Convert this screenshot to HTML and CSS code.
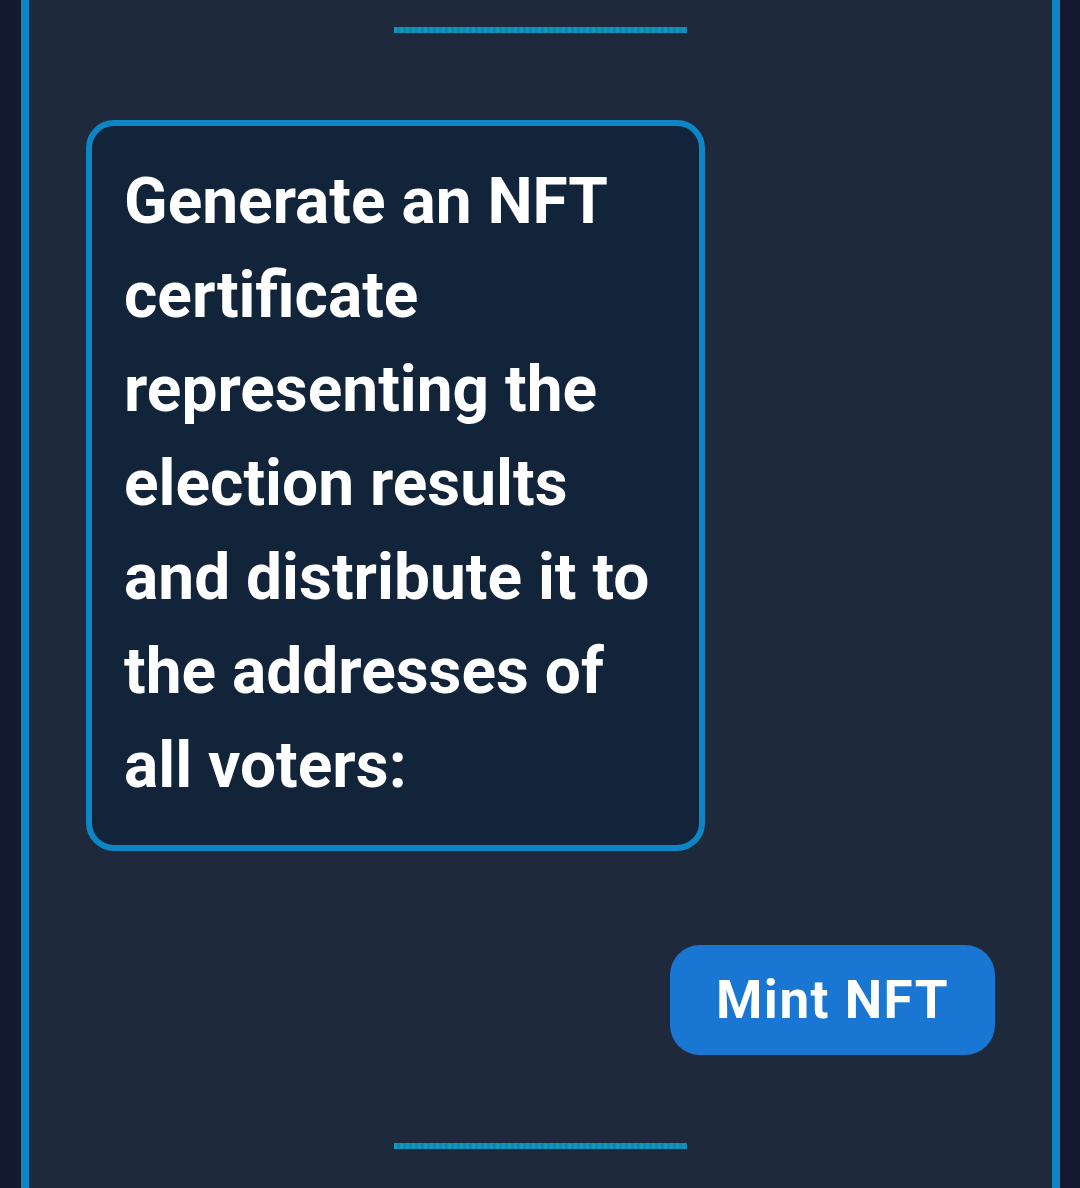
FILE: index.html
```html
<!DOCTYPE html>
<html lang="en">
<head>
<meta charset="utf-8">
<title>Mint NFT</title>
<link rel="stylesheet" href="styles.css">
</head>
<body>
<div class="frame">
  <div class="divider divider-top"></div>
  <div class="card">
    <p class="card-text">Generate an NFT certificate representing the election results and distribute it to the addresses of all voters:</p>
  </div>
  <div class="actions">
    <button class="mint-btn" type="button">Mint NFT</button>
  </div>
  <div class="divider divider-bottom"></div>
</div>
</body>
</html>
```

FILE: styles.css
```css
html, body {
  margin: 0;
  padding: 0;
  height: 100%;
}
body {
  background: #111a2e;
  font-family: Roboto, "Noto Sans", "Liberation Sans", sans-serif;
  overflow: hidden;
}
.frame {
  box-sizing: border-box;
  margin: 0 20px 0 21px;
  height: 1188px;
  background: #1e293b;
  border-left: 8px solid #0e86c6;
  border-right: 8px solid #0e86c6;
  display: flex;
  flex-direction: column;
}
.divider {
  align-self: center;
  width: 293px;
  height: 6px;
  background: repeating-linear-gradient(90deg, #0c9ab3 0 3px, #1b7ec2 3px 6px);
}
.divider-top {
  margin-top: 27px;
}
.card {
  box-sizing: border-box;
  margin: 87px 0 0 57px;
  width: 619px;
  height: 731px;
  background: #12243a;
  border: 6px solid #0e86c6;
  border-radius: 28px;
  padding: 29px 27px 0 32px;
}
.card-text {
  margin: 0;
  color: #ffffff;
  font-weight: 700;
  font-size: 64px;
  line-height: 94px;
}
.actions {
  display: flex;
  justify-content: flex-end;
  margin: 94px 57px 0 0;
}
.mint-btn {
  width: 325px;
  height: 110px;
  border: none;
  border-radius: 30px;
  background: #1976d2;
  color: #ffffff;
  font-family: Roboto, "Noto Sans", "Liberation Sans", sans-serif;
  font-weight: 700;
  font-size: 53px;
  letter-spacing: 1.5px;
  padding: 0;
}
.divider-bottom {
  margin-top: 88px;
}
```
